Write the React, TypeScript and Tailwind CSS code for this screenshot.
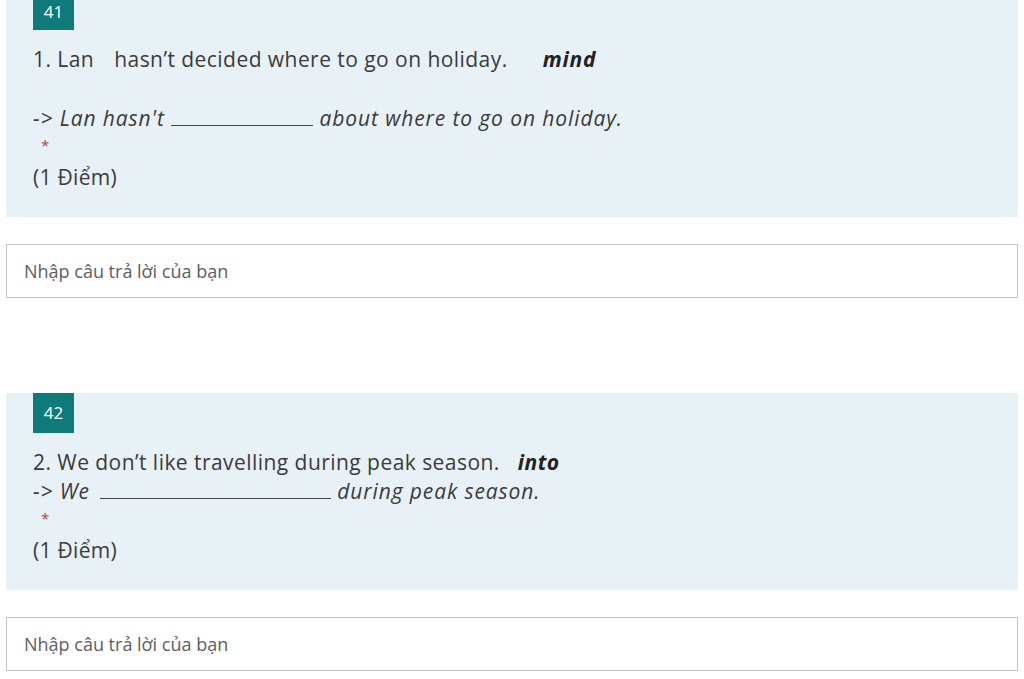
import React from "react";

const font = { fontFamily: '"Open Sans", "Noto Sans", sans-serif' };

function Badge({ n, first }: { n: string; first?: boolean }) {
  return (
    <div
      className={
        first
          ? "ml-[27px] flex h-[30px] w-[41px] items-center justify-center bg-[#0e7a7a] pb-[6px] text-[17px] leading-[20px] text-white"
          : "ml-[27px] flex h-[40px] w-[41px] items-center justify-center bg-[#0e7a7a] text-[17px] leading-[20px] text-white"
      }
    >
      {n}
    </div>
  );
}

function Star() {
  return <div className="ml-[35px] h-[25px] text-[15px] leading-[25px] text-[#b0424a]">*</div>;
}

function Points() {
  return <div className="mt-[5px] pl-[27px] text-[21px] leading-[29px] tracking-[0.3px] text-[#3b3b3b]">(1 Điểm)</div>;
}

function Blank({ w }: { w: string }) {
  return <span className={`inline-block h-[22px] border-b border-[#444] align-baseline ${w}`} />;
}

function AnswerBox() {
  return (
    <div className="mx-[6px] flex h-[54px] items-center border border-[#c4c4c4] bg-white pl-[17px] text-[18px] text-[#5e5e5e]">
      Nhập câu trả lời của bạn
    </div>
  );
}

export default function App() {
  return (
    <div className="min-h-[679px] overflow-hidden bg-white" style={font}>
      <div className="mx-[6px] bg-[#e8f1f5] pb-[25px]">
        <Badge n="41" first />
        <div className="mt-[15px] pl-[27px] text-[21px] leading-[29px] text-[#3b3b3b]">
          <div className="whitespace-nowrap tracking-[0.45px]">
            1. Lan<span className="inline-block w-[20px]" />hasn’t decided where to go on holiday.
            <span className="inline-block w-[35px]" />
            <b className="italic tracking-[0.8px] text-[#222]">mind</b>
          </div>
          <div className="h-[30px]" />
          <div className="whitespace-nowrap italic tracking-[0.9px]">
            -&gt; Lan hasn't <Blank w="w-[142px]" /> about where to go on holiday.
          </div>
        </div>
        <Star />
        <Points />
      </div>
      <div className="mt-[27px]">
        <AnswerBox />
      </div>
      <div className="mx-[6px] mt-[95px] bg-[#e8f1f5] pb-[25px]">
        <Badge n="42" />
        <div className="mt-[15px] pl-[27px] text-[21px] leading-[29px] text-[#3b3b3b]">
          <div className="whitespace-nowrap tracking-[0.45px]">
            2. We don’t like travelling during peak season.<span className="inline-block w-[18px]" />
            <b className="italic tracking-[0.5px] text-[#222]">into</b>
          </div>
          <div className="whitespace-nowrap italic tracking-[0.9px]">
            -&gt; We<span className="inline-block w-[10px]" /><Blank w="w-[231px]" /> during peak season.
          </div>
        </div>
        <Star />
        <Points />
      </div>
      <div className="mt-[27px]">
        <AnswerBox />
      </div>
    </div>
  );
}
